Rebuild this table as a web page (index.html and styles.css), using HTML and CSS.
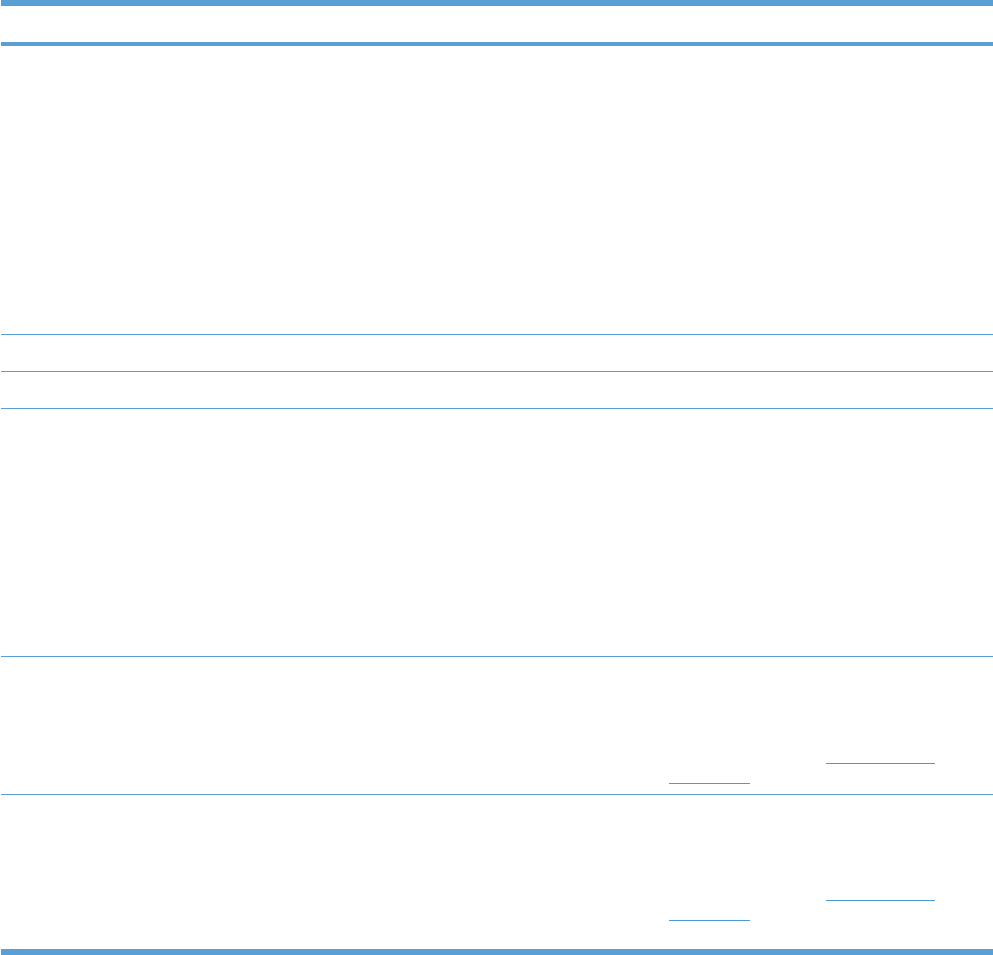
FILE: index.html
```html
<!DOCTYPE html>
<html lang="en">
<head>
	<meta charset="UTF-8">
	<title>Table</title>
	<link rel="stylesheet" href="styles.css">
</head>
<body>
	<div class="spec-table" role="table">
		<div class="row head" role="row">
			<div class="cell key" role="columnheader"></div>
			<div class="cell val" role="columnheader"></div>
		</div>
		<div class="row r-tall" role="row">
			<div class="cell key" role="cell"></div>
			<div class="cell val" role="cell"></div>
		</div>
		<div class="row r-short" role="row">
			<div class="cell key" role="cell"></div>
			<div class="cell val" role="cell"></div>
		</div>
		<div class="row r-short" role="row">
			<div class="cell key" role="cell"></div>
			<div class="cell val" role="cell"></div>
		</div>
		<div class="row r-mid" role="row">
			<div class="cell key" role="cell"></div>
			<div class="cell val" role="cell"></div>
		</div>
		<div class="row r-link" role="row">
			<div class="cell key" role="cell"></div>
			<div class="cell val" role="cell">
				<div class="link-block">
					<div class="link-line first"><a class="ref-link" href="#"></a></div>
					<div class="link-line"><a class="ref-link short" href="#"></a></div>
				</div>
			</div>
		</div>
		<div class="row r-link last" role="row">
			<div class="cell key" role="cell"></div>
			<div class="cell val" role="cell">
				<div class="link-block tight">
					<div class="link-line first"><a class="ref-link" href="#"></a></div>
					<div class="link-line"><a class="ref-link short" href="#"></a></div>
				</div>
			</div>
		</div>
	</div>
</body>
</html>
```

FILE: styles.css
```css
/* Base styles */
:root {
	--color-rule: #5a9fd4;
	--color-link: #4a9ad6;
}

body {
	margin: 0;
	font-family: "Liberation Sans", Arial, sans-serif;
	font-size: 14px;
	background: #fff;
}

/* Table */
.spec-table {
	margin-left: 1px;
	width: 992px;
}

.row {
	display: grid;
	grid-template-columns: 331px 1fr;
	border-bottom: 1px solid var(--color-rule);
}

.row.head {
	border-top: 6px solid var(--color-rule);
	border-bottom-width: 4px;
	height: 36px;
}

.row.r-tall { height: 288px; }
.row.r-short { height: 36px; }
.row.r-mid { height: 247px; }
.row.r-link { height: 137px; }

.row.last {
	height: 154px;
	border-bottom-width: 6px;
}

/* Links inside cells */
.link-block {
	padding: 87px 0 0 337px;
}

.link-block.tight {
	padding-top: 86px;
}

.link-line {
	height: 20px;
	display: flex;
	align-items: flex-end;
}

.link-line.first {
	padding-left: 157px;
}

.ref-link {
	display: block;
	width: 109px;
	height: 1px;
	background: var(--color-link);
}

.ref-link.short {
	width: 81px;
}
```
